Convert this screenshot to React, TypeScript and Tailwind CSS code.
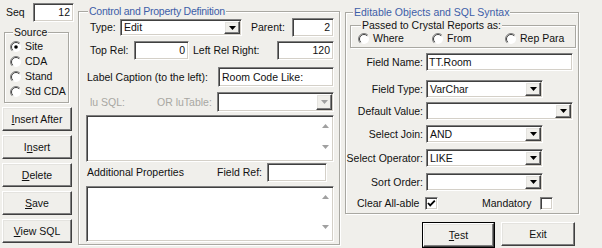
import React from "react";

const sunken =
  "bg-white border border-t-[#808080] border-l-[#808080] border-b-white border-r-white shadow-[inset_1px_1px_0_#404040,inset_-1px_-1px_0_#d4d0c8]";
const raised =
  "bg-[#f0efeb] border border-t-white border-l-white border-b-[#404040] border-r-[#404040] shadow-[inset_-1px_-1px_0_#808080,inset_1px_1px_0_#e4e3df]";
const etched =
  "border border-[#a9a8a2] shadow-[inset_1px_1px_0_#fff,1px_1px_0_#fff]";
const legendCls = "bg-[#f0efeb] px-[1px] leading-[13px]";

function Box({
  className = "",
  children,
}: {
  className?: string;
  children?: React.ReactNode;
}) {
  return (
    <div className={`${sunken} flex items-center shrink-0 ${className}`}>
      {children}
    </div>
  );
}

function Arrow({ color = "#000" }: { color?: string }) {
  return (
    <svg width="7" height="4" viewBox="0 0 7 4">
      <polygon points="0,0 7,0 3.5,4" fill={color} />
    </svg>
  );
}

function Combo({
  className = "",
  value = "",
  disabled = false,
}: {
  className?: string;
  value?: string;
  disabled?: boolean;
}) {
  return (
    <Box className={`p-[1px] ${className}`}>
      <span className="flex-1 pl-[2px] whitespace-nowrap">{value}</span>
      <div
        className={`${raised} w-[16px] h-full flex items-center justify-center`}
      >
        <Arrow color={disabled ? "#a0a0a0" : "#000"} />
      </div>
    </Box>
  );
}

function Radio({ checked = false }: { checked?: boolean }) {
  return (
    <svg width="12" height="12" viewBox="0 0 12 12" className="shrink-0">
      <circle cx="6" cy="6" r="5" fill="#fff" />
      <path d="M2.1 9.9 A5.5 5.5 0 0 1 9.9 2.1" stroke="#808080" fill="none" />
      <path d="M2.8 9.2 A4.5 4.5 0 0 1 9.2 2.8" stroke="#404040" fill="none" />
      {checked && <circle cx="6" cy="6" r="1.8" fill="#000" />}
    </svg>
  );
}

function Check({ checked = false }: { checked?: boolean }) {
  return (
    <Box className="w-[13px] h-[13px]">
      {checked && (
        <svg width="11" height="11" viewBox="0 0 11 11">
          <polyline
            points="2,5 4.2,7.4 8.8,2.6"
            stroke="#000"
            strokeWidth="1.8"
            fill="none"
          />
        </svg>
      )}
    </Box>
  );
}

function Btn({
  children,
  className = "",
}: {
  children: React.ReactNode;
  className?: string;
}) {
  return (
    <div
      className={`${raised} h-[24px] flex items-center justify-center shrink-0 ${className}`}
    >
      {children}
    </div>
  );
}

function TextArea({ className = "" }: { className?: string }) {
  return (
    <Box className={`w-full justify-end items-stretch ${className}`}>
      <div className="w-[16px] flex flex-col items-center justify-between pt-[8px] pb-[12px]">
        <svg width="7" height="4" viewBox="0 0 7 4">
          <polygon points="0,4 7,4 3.5,0" fill="#a0a0a0" />
        </svg>
        <Arrow color="#a0a0a0" />
      </div>
    </Box>
  );
}

function Row({
  label,
  className = "",
  children,
}: {
  label: string;
  className?: string;
  children: React.ReactNode;
}) {
  return (
    <div className={`flex items-center h-[18px] ${className}`}>
      <div className="w-[73px] flex justify-end whitespace-nowrap">{label}</div>
      <div className="ml-[3px] h-full flex">{children}</div>
    </div>
  );
}

export default function App() {
  return (
    <div className="w-[602px] h-[248px] overflow-hidden bg-[#f0efeb] flex items-start text-[10.5px] leading-[13px] text-[#111] [font-family:'Liberation_Sans',Arial,sans-serif]">
      {/* Left column */}
      <div className="w-[74px] shrink-0 flex flex-col">
        <div className="mt-[3px] h-[19px] flex items-center">
          <span className="ml-[6px]">Seq</span>
          <Box className="ml-auto w-[41px] h-[19px] justify-end pr-[3px]">
            12
          </Box>
        </div>
        <fieldset className={`${etched} mt-[4px] ml-[4px] w-[65px] pl-[5px] pb-[3px]`}>
          <legend className={`${legendCls} ml-[3px]`}>Source</legend>
          {[
            ["Site", true],
            ["CDA", false],
            ["Stand", false],
            ["Std CDA", false],
          ].map(([label, checked]) => (
            <div key={label as string} className="h-[15px] flex items-center gap-[3px]">
              <Radio checked={checked as boolean} />
              <span className="whitespace-nowrap">{label}</span>
            </div>
          ))}
        </fieldset>
        <div className="ml-[2px] mt-[4px] flex flex-col gap-[4px]">
          <Btn className="w-[70px]">
            <span>
              <span className="underline">I</span>nsert After
            </span>
          </Btn>
          <Btn className="w-[70px]">
            <span>
              I<span className="underline">n</span>sert
            </span>
          </Btn>
          <Btn className="w-[70px]">
            <span>
              <span className="underline">D</span>elete
            </span>
          </Btn>
          <Btn className="w-[70px]">
            <span>
              <span className="underline">S</span>ave
            </span>
          </Btn>
          <Btn className="w-[70px]">
            <span>
              <span className="underline">V</span>iew SQL
            </span>
          </Btn>
        </div>
      </div>

      {/* Control and Property Definition */}
      <fieldset className={`${etched} ml-[4px] mt-[5px] w-[262px] h-[240px] shrink-0 pl-[7px] pr-[5px]`}>
        <legend className={`${legendCls} ml-[2px] tracking-[-0.25px] text-[#3d5ea8]`}>
          Control and Property Definition
        </legend>
        <div className="flex items-center h-[19px]">
          <span className="ml-[4px] w-[30px]">Type:</span>
          <Combo className="w-[122px] h-[17px]" value="Edit" />
          <span className="ml-[9px]">Parent:</span>
          <Box className="ml-auto w-[42px] h-[19px] justify-end pr-[3px]">2</Box>
        </div>
        <div className="flex items-center h-[19px] mt-[4px]">
          <span className="ml-[4px] w-[44px]">Top Rel:</span>
          <Box className="w-[55px] h-[19px] justify-end pr-[3px]">0</Box>
          <span className="ml-[4px] whitespace-nowrap">Left Rel Right:</span>
          <Box className="ml-auto w-[57px] h-[19px] justify-end pr-[3px]">120</Box>
        </div>
        <div className="flex items-center h-[20px] mt-[7px]">
          <span className="ml-[1px] whitespace-nowrap">Label Caption (to the left):</span>
          <Box className="ml-auto w-[116px] h-[20px] pl-[3px] whitespace-nowrap">
            Room Code Like:
          </Box>
        </div>
        <div className="flex items-center h-[20px] mt-[5px] text-[#a8a7a2]">
          <span className="ml-[4px] w-[67px]">lu SQL:</span>
          <span>OR luTable:</span>
          <Combo className="ml-auto w-[117px] h-[20px]" disabled />
        </div>
        <TextArea className="h-[47px] mt-[3px]" />
        <div className="flex items-center h-[19px] mt-[1px]">
          <span className="ml-[1px]">Additional Properties</span>
          <span className="ml-auto">Field Ref:</span>
          <Box className="ml-[5px] mr-[7px] w-[60px] h-[19px]" />
        </div>
        <TextArea className="h-[56px] mt-[4px]" />
      </fieldset>

      {/* Editable Objects and SQL Syntax */}
      <div className="ml-[5px] flex flex-col shrink-0">
        <fieldset className={`${etched} mt-[6px] w-[234px] h-[208px] pl-[4px]`}>
          <legend className={`${legendCls} ml-[3px] text-[#3d5ea8]`}>
            Editable Objects and SQL Syntax
          </legend>
          <fieldset className={`${etched} w-[226px] pl-[7px] pb-[2px]`}>
            <legend className={`${legendCls} ml-[3px]`}>
              Passed to Crystal Reports as:
            </legend>
            <div className="flex items-center h-[13px]">
              <div className="w-[74px] flex items-center gap-[3px]">
                <Radio />
                <span>Where</span>
              </div>
              <div className="w-[73px] flex items-center gap-[3px]">
                <Radio />
                <span>From</span>
              </div>
              <div className="flex items-center gap-[3px]">
                <Radio />
                <span>Rep Para</span>
              </div>
            </div>
          </fieldset>
          <Row label="Field Name:" className="mt-[5px]">
            <Box className="w-[147px] h-full pl-[2px]">TT.Room</Box>
          </Row>
          <Row label="Field Type:" className="mt-[9px]">
            <Combo className="w-[117px] h-full" value="VarChar" />
          </Row>
          <Row label="Default Value:" className="mt-[4px]">
            <Combo className="w-[147px] h-full" />
          </Row>
          <Row label="Select Join:" className="mt-[5px]">
            <Combo className="w-[117px] h-full" value="AND" />
          </Row>
          <Row label="Select Operator:" className="mt-[6px]">
            <Combo className="w-[117px] h-full" value="LIKE" />
          </Row>
          <Row label="Sort Order:" className="mt-[6px]">
            <Combo className="w-[117px] h-full" />
          </Row>
          <div className="flex items-center h-[13px] mt-[6px]">
            <span className="ml-[7px] w-[68px] whitespace-nowrap">Clear All-able</span>
            <Check checked />
            <span className="ml-[44px] w-[58px]">Mandatory</span>
            <Check />
          </div>
        </fieldset>
        <div className="mt-[8px] pl-[77px] flex gap-[6px]">
          <div className="border border-black">
            <Btn className="w-[71px] h-[21px]">
              <span>
                <span className="underline">T</span>est
              </span>
            </Btn>
          </div>
          <Btn className="w-[74px] h-[23px]">Exit</Btn>
        </div>
      </div>
    </div>
  );
}
